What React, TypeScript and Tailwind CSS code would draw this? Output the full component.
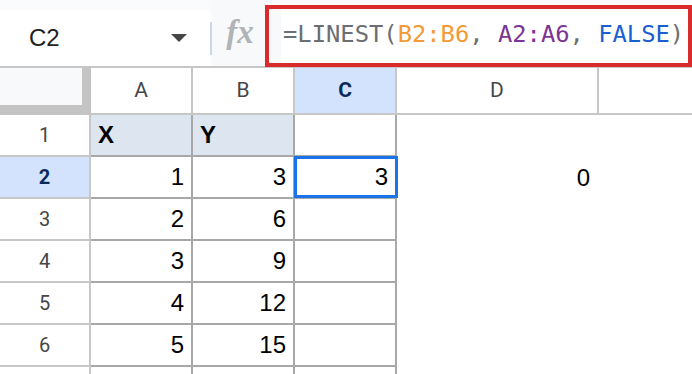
const rows = [
  { n: 1, a: "X", b: "Y", c: "", d: "" },
  { n: 2, a: "1", b: "3", c: "3", d: "0" },
  { n: 3, a: "2", b: "6", c: "", d: "" },
  { n: 4, a: "3", b: "9", c: "", d: "" },
  { n: 5, a: "4", b: "12", c: "", d: "" },
  { n: 6, a: "5", b: "15", c: "", d: "" },
]

function FormulaBar() {
  return (
    <div className="flex h-[68px] bg-[#f9fbfd] border-b-2 border-[#c7c7c7]">
      <div className="mt-[10px] h-[56px] w-[211px] bg-white flex items-center justify-between pl-[29px] pr-[23px]">
        <span className="text-[24px] leading-none text-[#1f1f1f]">C2</span>
        <svg width="16" height="8" viewBox="0 0 16 8">
          <polygon points="0,0 16,0 8,8" fill="#444746" />
        </svg>
      </div>
      <div className="mt-[22px] h-[33px] w-[2px] bg-[#c9d8ec]" />
      <div className="w-[53px] bg-[#f8f9fa] flex items-center justify-center pl-[3px] pb-[1px]">
        <span className="font-['Liberation_Serif',serif] italic font-bold text-[33px] leading-none text-[#b0b3b7]">
          fx
        </span>
      </div>
      <div className="mt-[5px] h-[62px] w-[427px] shrink-0 border-4 border-[#d92b2b] bg-[#f8f9fa] flex pl-[12px]">
        <div className="flex-1 bg-white flex items-center pl-[2px] pb-[2px] font-['DejaVu_Sans_Mono',monospace] text-[23.8px] leading-none whitespace-pre">
          <span className="text-[#6b6e72]">=LINEST(</span>
          <span className="text-[#f29b34]">B2:B6</span>
          <span className="text-[#6b6e72]">, </span>
          <span className="text-[#7d3594]">A2:A6</span>
          <span className="text-[#6b6e72]">, </span>
          <span className="text-[#1a5fd0]">FALSE</span>
          <span className="text-[#6b6e72]">)</span>
        </div>
      </div>
    </div>
  )
}

function Sheet() {
  const colHead =
    "border-r-2 border-b-2 border-[#c7c7c7] bg-white flex items-center justify-center font-['Roboto',sans-serif] text-[21px] text-[#444746]"
  const rowHead =
    "border-r-2 border-b-2 border-[#c7c7c7] flex items-center justify-center font-['Roboto',sans-serif] text-[20px]"
  const cell = "border-r-2 border-b-2 border-[#a8a8a8] flex items-center text-[24px] leading-none"

  return (
    <div className="grid grid-cols-[91px_102px_102px_102px_202px_93px] grid-rows-[47px_repeat(6,42px)_10px]">
      {/* corner */}
      <div className="bg-[#c4c4c4] border-b-2 border-[#c4c4c4]">
        <div className="w-[82px] h-[37px] bg-[#f8f9fa]" />
      </div>
      <div className={colHead}>A</div>
      <div className={colHead}>B</div>
      <div className={`${colHead} !bg-[#d3e3fd] font-bold !text-[#0b2a5c]`}>C</div>
      <div className={colHead}>D</div>
      <div className="border-b-2 border-[#c7c7c7] bg-white" />

      {rows.map((r) => {
        const first = r.n === 1
        const sel = r.n === 2
        return [
          <div
            key={`h${r.n}`}
            className={`${rowHead} ${sel ? "bg-[#d3e3fd] font-bold text-[#0b2a5c]" : "bg-white text-[#444746]"}`}
          >
            {r.n}
          </div>,
          <div
            key={`a${r.n}`}
            className={`${cell} ${first ? "bg-[#dde6f0] font-bold justify-start pl-[7px]" : "justify-end pr-[7px]"}`}
          >
            {r.a}
          </div>,
          <div
            key={`b${r.n}`}
            className={`${cell} ${first ? "bg-[#dde6f0] font-bold justify-start pl-[7px]" : "justify-end pr-[7px]"}`}
          >
            {r.b}
          </div>,
          <div key={`c${r.n}`} className={`${cell} justify-end pr-[7px] relative`}>
            {r.c}
            {sel && (
              <div className="absolute left-[-1px] top-[-1px] w-[104px] h-[42px] border-[3px] border-[#1a73e8]" />
            )}
          </div>,
          <div key={`d${r.n}`} className="flex items-center justify-end pr-[9px] text-[24px] leading-none">
            {r.d}
          </div>,
          <div key={`e${r.n}`} />,
        ]
      })}

      <div className="border-r-2 border-[#c7c7c7]" />
      <div className="border-r-2 border-[#a8a8a8]" />
      <div className="border-r-2 border-[#a8a8a8]" />
      <div className="border-r-2 border-[#a8a8a8]" />
      <div />
      <div />
    </div>
  )
}

export default function App() {
  return (
    <div className="w-[692px] h-[374px] overflow-hidden bg-white font-['Liberation_Sans',Arial,sans-serif] text-black">
      <FormulaBar />
      <Sheet />
    </div>
  )
}
